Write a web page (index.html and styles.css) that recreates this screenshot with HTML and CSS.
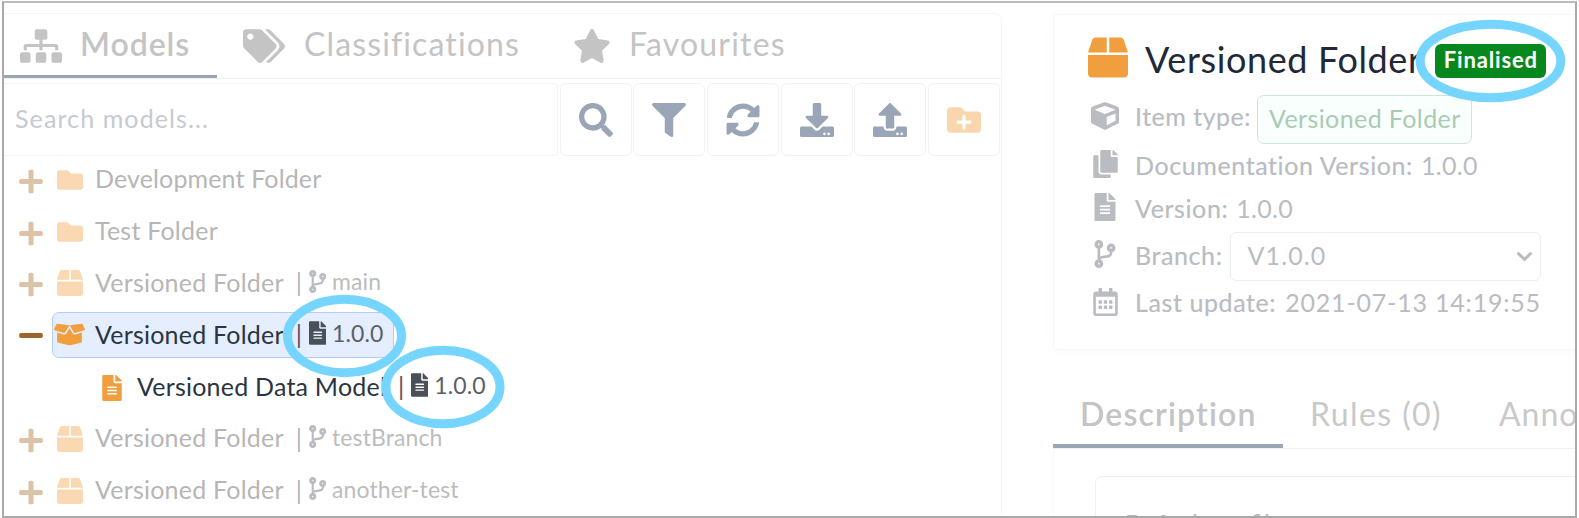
FILE: index.html
```html
<!DOCTYPE html>
<html lang="en">
<head>
<meta charset="utf-8">
<title>Versioned Folder</title>
<link rel="stylesheet" href="styles.css">
</head>
<body>
<svg class="sprite" aria-hidden="true">
  <symbol id="sitemap" viewBox="0 0 640 512"><path d="M128 352H32c-17.67 0-32 14.33-32 32v96c0 17.67 14.33 32 32 32h96c17.67 0 32-14.33 32-32v-96c0-17.67-14.33-32-32-32zm-24-80h192v48h48v-48h192v48h48v-57.59c0-21.17-17.23-38.41-38.41-38.41H344v-64h40c17.67 0 32-14.33 32-32V32c0-17.67-14.33-32-32-32H256c-17.67 0-32 14.33-32 32v96c0 17.67 14.33 32 32 32h40v64H94.41C73.23 224 56 241.23 56 262.41V320h48v-48zm264 80h-96c-17.67 0-32 14.33-32 32v96c0 17.67 14.33 32 32 32h96c17.67 0 32-14.33 32-32v-96c0-17.67-14.33-32-32-32zm240 0h-96c-17.67 0-32 14.33-32 32v96c0 17.67 14.33 32 32 32h96c17.67 0 32-14.33 32-32v-96c0-17.67-14.33-32-32-32z"/></symbol>
  <symbol id="tags" viewBox="0 0 640 512"><path d="M497.941 225.941L286.059 14.059A48 48 0 0 0 252.118 0H48C21.49 0 0 21.49 0 48v204.118a48 48 0 0 0 14.059 33.941l211.882 211.882c18.744 18.745 49.136 18.746 67.882 0l204.118-204.118c18.745-18.745 18.745-49.137 0-67.882zM112 160c-26.51 0-48-21.49-48-48s21.49-48 48-48 48 21.49 48 48-21.49 48-48 48zm513.941 133.823L421.823 497.941c-18.745 18.745-49.137 18.745-67.882 0l-.36-.36L527.64 323.522c16.999-16.999 26.36-39.6 26.36-63.64s-9.362-46.641-26.36-63.64L331.397 0h48.721a48 48 0 0 1 33.941 14.059l211.882 211.882c18.745 18.745 18.745 49.137 0 67.882z"/></symbol>
  <symbol id="star" viewBox="0 0 576 512"><path d="M259.3 17.8L194 150.2 47.9 171.5c-26.2 3.8-36.7 36.1-17.7 54.6l105.7 103-25 145.5c-4.5 26.3 23.2 46 46.4 33.7L288 439.6l130.7 68.7c23.2 12.2 50.9-7.4 46.4-33.7l-25-145.5 105.7-103c19-18.5 8.5-50.8-17.7-54.6L382 150.2 316.7 17.8c-11.7-23.6-45.6-23.9-57.4 0z"/></symbol>
  <symbol id="search" viewBox="0 0 512 512"><path d="M505 442.7L405.3 343c-4.5-4.5-10.6-7-17-7H372c27.6-35.3 44-79.7 44-128C416 93.1 322.9 0 208 0S0 93.1 0 208s93.1 208 208 208c48.3 0 92.7-16.4 128-44v16.3c0 6.4 2.5 12.5 7 17l99.7 99.7c9.4 9.4 24.6 9.4 33.9 0l28.3-28.3c9.4-9.4 9.4-24.6.1-34zM208 336c-70.7 0-128-57.2-128-128 0-70.7 57.2-128 128-128 70.7 0 128 57.2 128 128 0 70.7-57.2 128-128 128z"/></symbol>
  <symbol id="filter" viewBox="0 0 512 512"><path d="M487.976 0H24.028C2.71 0-8.047 25.866 7.058 40.971L192 225.941V432c0 7.831 3.821 15.17 10.237 19.662l80 55.98C298.02 518.69 320 507.493 320 487.98V225.941l184.947-184.97C520.021 25.896 509.338 0 487.976 0z"/></symbol>
  <symbol id="sync" viewBox="0 0 512 512"><path d="M370.72 133.28C339.458 104.008 298.888 87.962 255.848 88c-77.458.068-144.328 53.178-162.791 126.85-1.344 5.363-6.122 9.15-11.651 9.15H24.103c-7.498 0-13.194-6.807-11.807-14.176C33.933 94.924 134.813 8 256 8c66.448 0 126.791 26.136 171.315 68.685L463.03 40.97C478.149 25.851 504 36.559 504 57.941V192c0 13.255-10.745 24-24 24H345.941c-21.382 0-32.09-25.851-16.971-40.971l41.75-41.749zM32 296h134.059c21.382 0 32.09 25.851 16.971 40.971l-41.75 41.75c31.262 29.273 71.835 45.319 114.876 45.28 77.418-.07 144.315-53.144 162.787-126.849 1.344-5.363 6.122-9.15 11.651-9.15h57.304c7.498 0 13.194 6.807 11.807 14.176C478.067 417.076 377.187 504 256 504c-66.448 0-126.791-26.136-171.315-68.685L48.97 471.03C33.851 486.149 8 475.441 8 454.059V320c0-13.255 10.745-24 24-24z"/></symbol>
  <symbol id="download" viewBox="0 0 512 512"><path d="M216 0h80c13.3 0 24 10.7 24 24v168h87.7c17.8 0 26.7 21.5 14.1 34.1L269.7 378.3c-7.5 7.5-19.8 7.5-27.3 0L90.1 226.1c-12.6-12.6-3.7-34.1 14.1-34.1H192V24c0-13.3 10.7-24 24-24zm296 376v112c0 13.3-10.7 24-24 24H24c-13.3 0-24-10.7-24-24V376c0-13.3 10.7-24 24-24h146.7l49 49c20.1 20.1 52.5 20.1 72.6 0l49-49H488c13.3 0 24 10.7 24 24zm-124 88c0-11-9-20-20-20s-20 9-20 20 9 20 20 20 20-9 20-20zm64 0c0-11-9-20-20-20s-20 9-20 20 9 20 20 20 20-9 20-20z"/></symbol>
  <symbol id="upload" viewBox="0 0 512 512"><path d="M296 384h-80c-13.3 0-24-10.7-24-24V192h-87.7c-17.8 0-26.7-21.5-14.1-34.1L242.3 5.7c7.5-7.5 19.8-7.5 27.3 0l152.2 152.2c12.6 12.6 3.7 34.1-14.1 34.1H320v168c0 13.3-10.7 24-24 24zm216-8v112c0 13.3-10.7 24-24 24H24c-13.3 0-24-10.7-24-24V376c0-13.3 10.7-24 24-24h136v8c0 30.9 25.1 56 56 56h80c30.9 0 56-25.1 56-56v-8h136c13.3 0 24 10.7 24 24zm-124 88c0-11-9-20-20-20s-20 9-20 20 9 20 20 20 20-9 20-20zm64 0c0-11-9-20-20-20s-20 9-20 20 9 20 20 20 20-9 20-20z"/></symbol>
  <symbol id="folder-plus" viewBox="0 0 512 512"><path d="M464 128H272l-64-64H48C21.49 64 0 85.49 0 112v288c0 26.51 21.49 48 48 48h416c26.51 0 48-21.49 48-48V176c0-26.51-21.49-48-48-48zm-96 168c0 8.84-7.16 16-16 16h-72v72c0 8.84-7.16 16-16 16h-16c-8.84 0-16-7.16-16-16v-72h-72c-8.84 0-16-7.16-16-16v-16c0-8.84 7.16-16 16-16h72v-72c0-8.84 7.16-16 16-16h16c8.84 0 16 7.16 16 16v72h72c8.84 0 16 7.16 16 16v16z"/></symbol>
  <symbol id="folder" viewBox="0 0 512 512"><path d="M464 128H272l-64-64H48C21.49 64 0 85.49 0 112v288c0 26.51 21.49 48 48 48h416c26.51 0 48-21.49 48-48V176c0-26.51-21.49-48-48-48z"/></symbol>
  <symbol id="plus" viewBox="0 0 448 512"><path d="M416 208H272V64c0-17.67-14.33-32-32-32h-32c-17.67 0-32 14.33-32 32v144H32c-17.67 0-32 14.33-32 32v32c0 17.67 14.33 32 32 32h144v144c0 17.67 14.33 32 32 32h32c17.67 0 32-14.33 32-32V304h144c17.67 0 32-14.33 32-32v-32c0-17.67-14.33-32-32-32z"/></symbol>
  <symbol id="minus" viewBox="0 0 448 512"><path d="M416 208H32c-17.67 0-32 14.33-32 32v32c0 17.67 14.33 32 32 32h384c17.67 0 32-14.33 32-32v-32c0-17.67-14.33-32-32-32z"/></symbol>
  <symbol id="box" viewBox="0 0 512 512"><path d="M509.5 184.6L458.9 32.8C452.4 13.2 434.1 0 413.4 0H272v192h238.7c-.4-2.5-.4-5-1.2-7.4zM240 0H98.6c-20.7 0-39 13.2-45.5 32.8L2.5 184.6c-.8 2.4-.8 4.9-1.2 7.4H240V0zM0 224v240c0 26.5 21.5 48 48 48h416c26.5 0 48-21.5 48-48V224H0z"/></symbol>
  <symbol id="box-open" viewBox="0 0 640 512"><path d="M425.7 256c-16.9 0-32.8-9-41.4-23.4L320 126l-64.2 106.6c-8.7 14.5-24.6 23.5-41.5 23.5-4.5 0-9-.6-13.3-1.9L64 215v178c0 14.7 10 27.5 24.2 31l216.2 54.1c10.2 2.5 20.9 2.5 31 0L551.8 424c14.2-3.6 24.2-16.4 24.2-31V215l-137 39.1c-4.3 1.3-8.8 1.9-13.3 1.9zm212.6-112.2L586.8 41c-3.1-6.2-9.8-9.8-16.7-8.9L320 64l91.7 152.1c3.8 6.3 11.4 9.3 18.5 7.3l197.9-56.5c9.9-2.9 14.7-13.9 10.2-23.1zM53.2 41L1.7 143.8c-4.6 9.2.3 20.2 10.1 23l197.9 56.5c7.1 2 14.7-1 18.5-7.3L320 64 69.8 32.1c-6.9-.8-13.5 2.7-16.6 8.9z"/></symbol>
  <symbol id="file" viewBox="0 0 384 512"><path d="M224 136V0H24C10.7 0 0 10.7 0 24v464c0 13.3 10.7 24 24 24h336c13.3 0 24-10.7 24-24V160H248c-13.2 0-24-10.8-24-24zm64 236c0 6.6-5.4 12-12 12H108c-6.6 0-12-5.4-12-12v-8c0-6.6 5.4-12 12-12h168c6.6 0 12 5.4 12 12v8zm0-64c0 6.6-5.4 12-12 12H108c-6.6 0-12-5.4-12-12v-8c0-6.6 5.4-12 12-12h168c6.6 0 12 5.4 12 12v8zm0-72v8c0 6.6-5.4 12-12 12H108c-6.6 0-12-5.4-12-12v-8c0-6.6 5.4-12 12-12h168c6.6 0 12 5.4 12 12zm96-114.1v6.1H256V0h6.1c6.4 0 12.5 2.5 17 7l97.9 98c4.5 4.5 7 10.6 7 16.9z"/></symbol>
  <symbol id="branch" viewBox="0 0 384 512"><path d="M384 144c0-44.2-35.8-80-80-80s-80 35.8-80 80c0 36.4 24.3 67.1 57.5 76.8-.6 16.1-4.2 28.5-11 36.9-15.4 19.2-49.3 22.4-85.2 25.7-28.2 2.6-57.4 5.4-81.3 16.9v-144c32.5-10.2 56-40.5 56-76.3 0-44.2-35.8-80-80-80S0 35.8 0 80c0 35.8 23.5 66.1 56 76.3v199.3C23.5 365.9 0 396.2 0 432c0 44.2 35.8 80 80 80s80-35.8 80-80c0-34-21.2-63.1-51.2-74.6 3.1-5.2 7.8-9.8 14.9-13.4 16.2-8.2 40.4-10.4 66.1-12.8 42.2-3.9 90-8.4 118.2-43.4 14-17.4 21.1-39.8 21.6-67.9 31.6-10.8 54.4-40.7 54.4-75.9zM80 64c8.8 0 16 7.2 16 16s-7.2 16-16 16-16-7.2-16-16 7.2-16 16-16zm0 384c-8.8 0-16-7.2-16-16s7.2-16 16-16 16 7.2 16 16-7.2 16-16 16zm224-320c8.8 0 16 7.2 16 16s-7.2 16-16 16-16-7.2-16-16 7.2-16 16-16z"/></symbol>
  <symbol id="cube" viewBox="0 0 512 512"><path d="M239.1 6.3l-208 78c-18.7 7-31.1 25-31.1 45v225.1c0 18.2 10.3 34.8 26.5 42.9l208 104c13.5 6.8 29.4 6.8 42.9 0l208-104c16.3-8.1 26.5-24.8 26.5-42.9V129.3c0-20-12.4-37.9-31.1-44.9l-208-78C262 2.2 250 2.2 239.1 6.3zM256 68.4l192 72v1.1l-192 78-192-78v-1.1l192-72zm32 356V275.5l160-65v133.9l-160 80z"/></symbol>
  <symbol id="copy" viewBox="0 0 448 512"><path d="M320 448v40c0 13.255-10.745 24-24 24H24c-13.255 0-24-10.745-24-24V120c0-13.255 10.745-24 24-24h72v296c0 30.879 25.121 56 56 56h168zm0-344V0H152c-13.255 0-24 10.745-24 24v368c0 13.255 10.745 24 24 24h272c13.255 0 24-10.745 24-24V128H344c-13.2 0-24-10.8-24-24zm120.971-31.029L375.029 7.029A24 24 0 0 0 358.059 0H352v96h96v-6.059a24 24 0 0 0-7.029-16.97z"/></symbol>
  <symbol id="calendar" viewBox="0 0 448 512"><path d="M148 288h-40c-6.6 0-12-5.4-12-12v-40c0-6.6 5.4-12 12-12h40c6.6 0 12 5.4 12 12v40c0 6.6-5.4 12-12 12zm108-12v-40c0-6.6-5.4-12-12-12h-40c-6.6 0-12 5.4-12 12v40c0 6.6 5.4 12 12 12h40c6.6 0 12-5.4 12-12zm96 0v-40c0-6.6-5.4-12-12-12h-40c-6.6 0-12 5.4-12 12v40c0 6.6 5.4 12 12 12h40c6.6 0 12-5.4 12-12zm-96 96v-40c0-6.6-5.4-12-12-12h-40c-6.6 0-12 5.4-12 12v40c0 6.6 5.4 12 12 12h40c6.6 0 12-5.4 12-12zm-96 0v-40c0-6.6-5.4-12-12-12h-40c-6.6 0-12 5.4-12 12v40c0 6.6 5.4 12 12 12h40c6.6 0 12-5.4 12-12zm192 0v-40c0-6.6-5.4-12-12-12h-40c-6.6 0-12 5.4-12 12v40c0 6.6 5.4 12 12 12h40c6.6 0 12-5.4 12-12zm96-260v352c0 26.5-21.5 48-48 48H48c-26.5 0-48-21.5-48-48V112c0-26.5 21.5-48 48-48h48V12c0-6.6 5.4-12 12-12h40c6.6 0 12 5.4 12 12v52h128V12c0-6.6 5.4-12 12-12h40c6.6 0 12 5.4 12 12v52h48c26.5 0 48 21.5 48 48zm-48 346V160H48v298c0 3.3 2.7 6 6 6h340c3.3 0 6-2.7 6-6z"/></symbol>
</svg>

<main class="frame">
  <section class="explorer">
    <nav class="tabs">
      <a class="tab tab-models active"><svg class="i-sitemap"><use href="#sitemap"/></svg><span>Models</span></a>
      <a class="tab tab-class"><svg class="i-sitemap"><use href="#tags"/></svg><span>Classifications</span></a>
      <a class="tab tab-fav"><svg class="i-star"><use href="#star"/></svg><span>Favourites</span></a>
    </nav>
    <div class="toolbar">
      <div class="search"><span>Search models...</span></div>
      <div class="btn"><svg><use href="#search"/></svg></div>
      <div class="btn"><svg><use href="#filter"/></svg></div>
      <div class="btn"><svg><use href="#sync"/></svg></div>
      <div class="btn"><svg><use href="#download"/></svg></div>
      <div class="btn"><svg><use href="#upload"/></svg></div>
      <div class="btn add"><svg><use href="#folder-plus"/></svg></div>
    </div>
    <div class="tree">
      <div class="row"><svg class="toggle"><use href="#plus"/></svg><div class="node"><svg class="kind folder"><use href="#folder"/></svg><span class="name dev">Development Folder</span></div></div>
      <div class="row"><svg class="toggle"><use href="#plus"/></svg><div class="node"><svg class="kind folder"><use href="#folder"/></svg><span class="name">Test Folder</span></div></div>
      <div class="row"><svg class="toggle"><use href="#plus"/></svg><div class="node"><svg class="kind"><use href="#box"/></svg><span class="name">Versioned Folder</span><span class="bar">|</span><svg class="ref-icon"><use href="#branch"/></svg><span class="ref">main</span></div></div>
      <div class="row live"><svg class="toggle"><use href="#minus"/></svg><div class="node selected"><svg class="kind open"><use href="#box-open"/></svg><span class="name">Versioned Folder</span><span class="bar">|</span><svg class="ref-icon"><use href="#file"/></svg><span class="ref">1.0.0</span></div></div>
      <div class="row live child"><div class="node"><svg class="kind doc"><use href="#file"/></svg><span class="name">Versioned Data Model</span><span class="bar">|</span><svg class="ref-icon"><use href="#file"/></svg><span class="ref">1.0.0</span></div></div>
      <div class="row"><svg class="toggle"><use href="#plus"/></svg><div class="node"><svg class="kind"><use href="#box"/></svg><span class="name">Versioned Folder</span><span class="bar">|</span><svg class="ref-icon"><use href="#branch"/></svg><span class="ref">testBranch</span></div></div>
      <div class="row"><svg class="toggle"><use href="#plus"/></svg><div class="node"><svg class="kind"><use href="#box"/></svg><span class="name">Versioned Folder</span><span class="bar">|</span><svg class="ref-icon"><use href="#branch"/></svg><span class="ref">another-test</span></div></div>
    </div>
  </section>

  <section class="details">
    <div class="card">
      <header class="title"><svg><use href="#box"/></svg><h1>Versioned Folder</h1><span class="badge">Finalised</span></header>
      <div class="meta m-type"><span class="mi"><svg class="w28"><use href="#cube"/></svg></span><span class="label">Item type:</span><span class="chip">Versioned Folder</span></div>
      <div class="meta m-doc"><span class="mi"><svg class="w25"><use href="#copy"/></svg></span><span class="label">Documentation Version:</span><span class="value">1.0.0</span></div>
      <div class="meta m-ver"><span class="mi"><svg class="w22"><use href="#file"/></svg></span><span class="label">Version:</span><span class="value">1.0.0</span></div>
      <div class="meta m-branch"><span class="mi"><svg class="w22"><use href="#branch"/></svg></span><span class="label">Branch:</span><span class="select"><span>V1.0.0</span><svg viewBox="0 0 16 10"><path d="M1.500 1.500L8 7.700l6.500-6.200"/></svg></span></div>
      <div class="meta m-date"><span class="mi"><svg class="w25"><use href="#calendar"/></svg></span><span class="label">Last update:</span><span class="value date">2021-07-13 14:19:55</span></div>
    </div>
    <nav class="subtabs">
      <a class="subtab active">Description</a><a class="subtab rules">Rules (0)</a><a class="subtab anno">Anno</a>
    </nav>
    <div class="pane"><div class="profile"><span>Default profile</span></div></div>
  </section>

  <svg class="marks" viewBox="0 0 1579 518">
    <ellipse cx="344.500" cy="336" rx="57" ry="36.700"/>
    <ellipse cx="443" cy="387" rx="57" ry="36.700"/>
    <ellipse cx="1490.500" cy="61" rx="70.300" ry="36.700"/>
  </svg>
</main>
</body>
</html>
```
FILE: styles.css
```css
* { box-sizing: border-box; }
body { margin: 0; padding: 1px 2px 0; background: #fff; font: 400 25px/30px Lato, "Open Sans", sans-serif; color: #b6b6b6; overflow: hidden; }
svg { display: block; fill: currentColor; flex: none; }
.sprite { display: none; }
span, a, h1 { white-space: nowrap; }

.frame { display: flex; width: 1575px; height: 517px; border: 2px solid #a9a9a9; border-top-color: #bdbdbd; overflow: hidden; }
.marks { position: absolute; left: 0; top: 0; width: 1579px; height: 518px; fill: none; stroke: #76d5ff; stroke-width: 9px; }

.explorer { flex: none; width: 998px; height: 520px; margin-top: 10px; border: solid #f6f6f6; border-width: 1px 1px 0 0; border-radius: 0 7px 0 0; }
.tabs { display: flex; height: 65px; border-bottom: 1px solid #f0f0f0; font-size: 32px; line-height: 38px; color: #c4c4c4; }
.tab { display: flex; align-items: center; height: 64px; padding-bottom: 1px; }
.tab span { padding-bottom: 3px; }
.tab svg { height: 34px; }
.i-sitemap { width: 42px; }
.i-star { width: 38px; }
.tab-models { width: 213px; padding: 2px 0 0 16px; border-bottom: 3px solid #9aa5b5; font-weight: 600; }
.tab-models span { margin-left: 18px; letter-spacing: .95px; }
.tab-class { padding-left: 26px; }
.tab-class span { margin-left: 19px; letter-spacing: 1.12px; }
.tab-fav { padding-left: 53px; }
.tab-fav span { margin-left: 18px; letter-spacing: 1.2px; }

.toolbar { display: flex; gap: 1.700px; height: 73px; margin-top: 4px; }
.search { flex: none; width: 554px; padding: 19px 0 0 11px; border: solid #f4f4f4; border-width: 1px 1px 1px 0; border-radius: 0 4px 4px 0; color: #c5cad2; letter-spacing: 1.1px; }
.btn { display: grid; place-items: center; flex: none; width: 72px; border: 1.500px solid #f2f2f2; border-radius: 6px; color: #9aa6b7; }
.btn svg { width: 34px; height: 34px; }
.add { color: #fad6ae; }

.tree { margin-top: -2px; }
.row { display: flex; align-items: center; height: 51.8px; padding-left: 15px; }
.toggle { width: 24px; height: 27px; margin: 3px 9px 0 0; color: #dbc3a8; }
.node { display: flex; align-items: center; height: 46px; padding: 0 10px 0 4px; border: 1.500px solid transparent; border-radius: 7px; }
.kind { width: 26px; height: 26px; margin-right: 12px; color: #f9d8b2; }
.folder { margin-top: 1px; }
.name { padding-bottom: 3px; letter-spacing: .22px; }
.dev { letter-spacing: .14px; }
.bar { margin-left: 12px; padding-bottom: 2px; color: #b6b6b6; }
.ref-icon { width: 17.500px; height: 23px; margin: 0 6px 4px 6.500px; color: #b9bcc0; }
.ref { padding-bottom: 4px; font-size: 23px; letter-spacing: .1px; color: #bcbcbc; }
.live .toggle { color: #a0642a; margin-top: 1px; }
.live .kind { color: #f19f3e; }
.live .name { color: #2b3442; }
.live .bar { color: #6a4a5c; }
.live .ref-icon { color: #495057; height: 24px; }
.live .ref { color: #5b6067; }
.selected { background: #e4eeff; border-color: #b3ccfb; }
.kind.open { width: 31px; height: 25px; margin: 0 10px 2px -3px; }
.child { padding-left: 93px; }
.child .doc { width: 20px; margin: 2px 15px 0 0; }

.details { flex: none; width: 522px; margin: 11px 0 0 51px; }
.card { height: 336px; padding: 20px 0 0 34px; border: solid #f7f7f7; border-width: 1px 0 1px 1px; border-radius: 4px 0 0 4px; box-shadow: 0 2px 14px rgba(0, 0, 0, .025); }
.title { display: flex; height: 60px; }
.title svg { width: 40px; height: 41px; margin-top: 2px; color: #f19f3e; }
h1 { margin: 2.500px 0 0 17px; font-size: 36px; line-height: 43px; font-weight: 400; letter-spacing: .62px; color: #212936; }
.badge { height: 34px; margin: 9px 0 0 13.500px; padding: 0 8.500px; border-radius: 6px; background: #06881f; color: #fff; font-size: 22px; line-height: 31px; font-weight: 700; letter-spacing: .85px; }
.meta { display: flex; align-items: center; color: #b9bcc1; }
.mi { display: flex; justify-content: center; width: 34px; margin-right: 13px; }
.mi svg { height: 28px; }
.w28 { width: 28px; }
.w25 { width: 25px; }
.w22 { width: 22px; }
.label { letter-spacing: .6px; -webkit-text-stroke: .2px #b9bcc1; }
.value { margin-left: 8px; letter-spacing: .3px; }
.date { margin-left: 9px; letter-spacing: .8px; }
.m-type { height: 49px; }
.m-type .mi, .m-type .label { padding-bottom: 8px; }
.m-type .label { letter-spacing: .5px; }
.chip { height: 49px; margin-left: 6px; padding: 7px 10.500px 0 11px; border: 1.500px solid #c9e9d5; border-radius: 7px; background: #f9fffc; color: #a9cbb4; letter-spacing: .4px; }
.m-doc { height: 42px; }
.m-doc span { padding-bottom: 1px; }
.m-doc .mi { padding-bottom: 3px; }
.m-ver { height: 44px; }
.m-ver .mi { padding-bottom: 2px; }
.m-branch { height: 51px; }
.m-branch .mi { padding-bottom: 3px; }
.m-branch .label { padding-bottom: 1px; }
.select { display: flex; align-items: center; justify-content: space-between; width: 311px; height: 49px; margin: 2px 0 0 7px; padding: 0 7px 4px 17px; border: 1.500px solid #eaeef1; border-radius: 6px; letter-spacing: 1.100px; }
.select svg { width: 17px; height: 11px; margin-top: 4px; fill: none; stroke: #b9bcc1; stroke-width: 2.800px; }
.m-date { height: 41px; }

.subtabs { display: flex; align-items: center; height: 65px; margin-top: 34px; border-bottom: 1.500px solid #f1f1f1; font-size: 32px; line-height: 38px; color: #c9c9c9; }
.subtab { flex: none; height: 64px; padding-top: 11px; }
.subtab.active { width: 230px; padding-left: 27px; border-bottom: 4px solid #9aa5b5; font-weight: 600; letter-spacing: 1.150px; color: #c4c4c4; }
.rules { margin-left: 27px; letter-spacing: 1.400px; }
.anno { margin-left: 57px; letter-spacing: 1px; }
.pane { height: 90px; padding: 27px 0 0 41px; border-left: 1px solid #fafafa; }
.profile { height: 90px; padding: 31px 0 0 29px; border: solid #f0f0f0; border-width: 1.500px 0 0 1.500px; border-radius: 7px 0 0 0; color: #b8b8b8; }
```
